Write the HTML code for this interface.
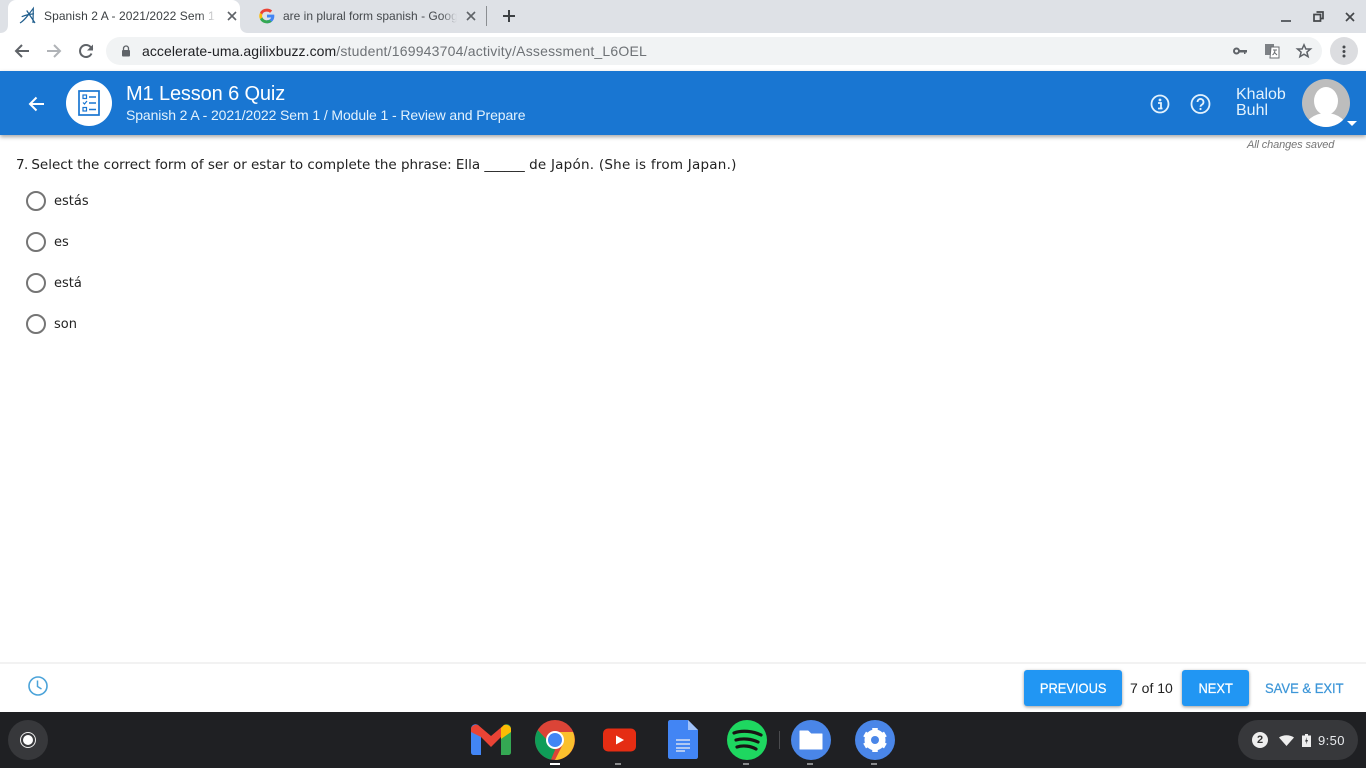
<!DOCTYPE html>
<html><head><meta charset="utf-8"><title>M1 Lesson 6 Quiz</title>
<style>
html,body{margin:0;padding:0;width:1366px;height:768px;overflow:hidden;background:#fff;font-family:"Liberation Sans",sans-serif}
.a{position:absolute;white-space:nowrap}
svg{position:absolute;overflow:visible}
.q{font-family:"DejaVu Sans",sans-serif;font-size:13px;color:#222}
.radio{position:absolute;left:26px;width:16px;height:16px;border:2px solid #757575;border-radius:50%}
.btn{position:absolute;top:670px;height:36px;background:#2196f3;color:#fff;border-radius:3px;box-shadow:0 1px 3px rgba(0,0,0,.4);font-size:14px;line-height:36px;text-align:center}
.btn span{display:inline-block;transform:scaleX(.92);-webkit-text-stroke:.25px #fff}
</style></head><body>
<!-- chrome top -->
<div class="a" style="left:0;top:0;width:1366px;height:33px;background:#dee1e6"></div>
<div class="a" style="left:8px;top:0;width:232px;height:33px;background:#fff;border-radius:8px 8px 0 0"></div>
<svg style="left:0;top:25px" width="8" height="8"><path d="M0 8C5 8 8 5 8 0V8Z" fill="#fff"/></svg>
<svg style="left:240px;top:25px" width="8" height="8"><path d="M8 8C3 8 0 5 0 0V8Z" fill="#fff"/></svg>
<div class="a" style="left:0;top:33px;width:1366px;height:38px;background:#fff"></div>
<svg style="left:18px;top:7px" width="20" height="18" viewBox="0 0 20 18"><path d="M2 16C7 13 11 7 15.300 1.300L15 16M3.700 9.700C8 8 12 7 16 7M8.700 3.500L17 16" fill="none" stroke="#1f5d8c" stroke-width="1.200"/></svg>
<div class="a" style="left:44px;top:8px;font-size:12px;line-height:16px;color:#3c4043;width:172px;overflow:hidden;letter-spacing:.07px">Spanish 2 A - 2021/2022 Sem 1</div>
<div class="a" style="left:200px;top:6px;width:16px;height:20px;background:linear-gradient(to right,rgba(255,255,255,0),#fff)"></div>
<svg style="left:227px;top:11px" width="10" height="10"><path d="M1 1L9 9M9 1L1 9" stroke="#5f6368" stroke-width="1.600"/></svg>
<svg style="left:259px;top:8px" width="16" height="16" viewBox="0 0 48 48"><path d="M46 20H24v8.500h12.500C35 33.400 30 36.500 24 36.500V46c12 0 22-8 22-22 0-1.400-.2-2.700-.4-4z" fill="#4285f4"/><path d="M24 37c-6.600 0-12.100-3.400-14-9.500L3 33.500C6.800 41.800 14.800 46 24 46c5.500 0 10.500-1.800 14.200-5l-6.800-5.500C29.300 36.800 26.800 37 24 37z" fill="#34a853"/><path d="M10 28.500c-1-3-1-6 0-9L3 14.500c-3 6-3 13 0 19z" fill="#fbbc05"/><path d="M24 11c3.500 0 6.500 1.200 9 3.500l6.500-6.500C35.500 4.300 30 2 24 2 14.800 2 6.800 6 3 14.500l7 5C11.900 13.400 17.400 11 24 11z" fill="#ea4335"/></svg>
<div class="a" style="left:283px;top:8px;font-size:12px;line-height:16px;color:#45494d;width:174px;overflow:hidden">are in plural form spanish - Google</div>
<div class="a" style="left:441px;top:6px;width:16px;height:20px;background:linear-gradient(to right,rgba(222,225,230,0),#dee1e6)"></div>
<svg style="left:466px;top:11px" width="10" height="10"><path d="M1 1L9 9M9 1L1 9" stroke="#5f6368" stroke-width="1.600"/></svg>
<div class="a" style="left:486px;top:6px;width:1px;height:20px;background:#8b8e92"></div>
<svg style="left:502px;top:9px" width="14" height="14"><path d="M7 1V13M1 7H13" stroke="#3c4043" stroke-width="2"/></svg>
<div class="a" style="left:1281px;top:20px;width:10px;height:2px;background:#5f6368"></div>
<svg style="left:1313px;top:11px" width="11" height="11"><path d="M3.500 1H10V7.500H8M1 3.500H7.500V10H1Z" fill="none" stroke="#44474a" stroke-width="1.700"/></svg>
<svg style="left:1345px;top:12px" width="10" height="10"><path d="M1 1L9 9M9 1L1 9" stroke="#44474a" stroke-width="1.700"/></svg>
<!-- toolbar -->
<svg style="left:14px;top:43px" width="16" height="16"><path d="M15 8H2M8 2L2 8L8 14" fill="none" stroke="#5f6368" stroke-width="2"/></svg>
<svg style="left:46px;top:43px" width="16" height="16"><path d="M1 8H14M8 2L14 8L8 14" fill="none" stroke="#b0b3b7" stroke-width="2"/></svg>
<svg style="left:78px;top:43px" width="16" height="16"><path d="M13.500 10.500A6 6 0 1 1 12.500 4L14.500 6" fill="none" stroke="#5f6368" stroke-width="2"/><path d="M15 1.500V7.500H9Z" fill="#5f6368"/></svg>
<div class="a" style="left:106px;top:37px;width:1216px;height:28px;background:#f1f3f4;border-radius:14px"></div>
<svg style="left:121px;top:45px" width="10" height="12"><path d="M2.500 5V3.500a2.500 2.500 0 0 1 5 0V5" fill="none" stroke="#5f6368" stroke-width="1.300"/><rect x="1" y="5" width="8" height="6.500" rx="1" fill="#5f6368"/></svg>
<div class="a" style="left:142px;top:43px;font-size:14px;line-height:16px;color:#202124;letter-spacing:.07px">accelerate-uma.agilixbuzz.com<span style="color:#6e7276;letter-spacing:.2px">/student/169943704/activity/Assessment_L6OEL</span></div>
<svg style="left:1233px;top:47px" width="14" height="8"><circle cx="3.500" cy="4" r="2.500" fill="none" stroke="#5f6368" stroke-width="2"/><path d="M6 3H14V5.500H12.500V7H11V5.500H6Z" fill="#5f6368"/></svg>
<svg style="left:1264px;top:43px" width="16" height="16"><rect x="1" y="1" width="9" height="11" fill="#7d8185"/><path d="M7 4H15V15H6Z" fill="#fff" stroke="#6a6d71"/><path d="M9 7H13M11 6.500C11 9 10 11 8.500 12M10 9L13 12" fill="none" stroke="#6a6d71"/></svg>
<svg style="left:1296px;top:43px" width="16" height="16" viewBox="0 0 16 16"><path d="M8 1.800L9.900 6H14.500L10.900 9.100L12.100 13.700L8 11.200L3.900 13.700L5.100 9.100L1.500 6H6.100Z" fill="none" stroke="#5f6368" stroke-width="1.500"/></svg>
<div class="a" style="left:1330px;top:37px;width:28px;height:28px;background:#dcdde0;border-radius:50%"></div>
<svg style="left:1342px;top:45px" width="4" height="13"><circle cx="2" cy="2" r="1.500" fill="#46494d"/><circle cx="2" cy="6.500" r="1.500" fill="#46494d"/><circle cx="2" cy="11" r="1.500" fill="#46494d"/></svg>
<!-- header -->
<div class="a" style="left:0;top:71px;width:1366px;height:64px;background:#1976d2;box-shadow:0 2px 4px rgba(0,0,0,.35)"></div>
<svg style="left:28px;top:96px" width="17" height="16"><path d="M16 8H2M8.500 1.500L2 8L8.500 14.500" fill="none" stroke="#fff" stroke-width="2"/></svg>
<div class="a" style="left:66px;top:80px;width:46px;height:46px;border-radius:50%;background:#fff"></div>
<svg style="left:78px;top:90px" width="22" height="26" viewBox="0 0 22 26"><rect x="1" y="1" width="20" height="24" fill="none" stroke="#1976d2" stroke-width="1.700"/><rect x="5" y="5" width="3.500" height="3.500" fill="none" stroke="#1976d2" stroke-width="1.200"/><path d="M11 7H18M11 13H18M11 19.500H18" stroke="#1976d2" stroke-width="1.500"/><path d="M5 12.500L6.500 14L9 11" fill="none" stroke="#1976d2" stroke-width="1.200"/><rect x="5" y="17.500" width="3.500" height="3.500" fill="none" stroke="#1976d2" stroke-width="1.200"/></svg>
<div class="a" style="left:126px;top:81px;font-size:20px;line-height:26px;color:#fff;letter-spacing:-.13px">M1 Lesson 6 Quiz</div>
<div class="a" style="left:126px;top:106px;font-size:14px;line-height:18px;color:#e3f2fd;letter-spacing:-.1px">Spanish 2 A - 2021/2022 Sem 1 / Module 1 - Review and Prepare</div>
<svg style="left:1150px;top:94px" width="20" height="20"><circle cx="10" cy="10" r="8.500" fill="none" stroke="#e3f2fd" stroke-width="1.800"/><circle cx="10" cy="6" r="1.400" fill="#e3f2fd"/><path d="M8 9H11V14M8 14.500H12.500" fill="none" stroke="#e3f2fd" stroke-width="1.800"/></svg>
<svg style="left:1190px;top:94px" width="21" height="20"><circle cx="10.500" cy="10" r="9" fill="none" stroke="#e3f2fd" stroke-width="1.800"/><path d="M7.500 8a3 3 0 1 1 4.500 2.600C11 11.200 10.500 11.800 10.500 12.800" fill="none" stroke="#e3f2fd" stroke-width="1.800"/><circle cx="10.500" cy="15" r="1.100" fill="#e3f2fd"/></svg>
<div class="a" style="left:1236px;top:87px;font-size:16px;line-height:15.500px;color:#e3f2fd">Khalob<br>Buhl</div>
<svg style="left:1302px;top:79px" width="48" height="48" viewBox="0 0 48 48"><defs><clipPath id="c"><circle cx="24" cy="24" r="24"/></clipPath></defs><circle cx="24" cy="24" r="24" fill="#bdbdbd"/><g clip-path="url(#c)"><ellipse cx="24" cy="22" rx="12" ry="14" fill="#fff"/><ellipse cx="24" cy="52" rx="22" ry="18" fill="#fff"/></g></svg>
<svg style="left:1347px;top:121px" width="10" height="5"><path d="M0 0H10L5 5Z" fill="#fff"/></svg>
<div class="a" style="left:1247px;top:138px;font-size:11px;line-height:14px;font-style:italic;color:#757575;letter-spacing:-.12px">All changes saved</div>
<!-- question -->
<div class="a q" style="left:16px;top:157px;line-height:16px;font-size:13.500px;letter-spacing:-.02px"><span style="letter-spacing:-.6px">7. </span>Select the correct form of ser or estar to complete the phrase: Ella ______ <span style="letter-spacing:.24px">de Japón. (She is from Japan.)</span></div>
<div class="radio" style="top:191px"></div><div class="a q" style="left:54px;top:194px;line-height:16px">estás</div>
<div class="radio" style="top:232px"></div><div class="a q" style="left:54px;top:235px;line-height:16px">es</div>
<div class="radio" style="top:273px"></div><div class="a q" style="left:54px;top:276px;line-height:16px">está</div>
<div class="radio" style="top:314px"></div><div class="a q" style="left:54px;top:317px;line-height:16px">son</div>
<!-- footer -->
<div class="a" style="left:0;top:662px;width:1366px;height:2px;background:#f2f2f2"></div>
<svg style="left:28px;top:676px" width="20" height="20"><circle cx="10" cy="10" r="9" fill="none" stroke="#4ba3d9" stroke-width="1.600"/><path d="M9.500 4.500V10.500L13.500 13" fill="none" stroke="#4ba3d9" stroke-width="1.500"/></svg>
<div class="btn" style="left:1024px;width:98px"><span>PREVIOUS</span></div>
<div class="a" style="left:1130px;top:679px;font-size:14px;line-height:18px;color:#222">7 of 10</div>
<div class="btn" style="left:1182px;width:67px"><span>NEXT</span></div>
<div class="a" style="left:1265px;top:679px;font-size:14px;line-height:18px;color:#3d96d8;transform:scaleX(.93);transform-origin:left;-webkit-text-stroke:.25px #3d96d8">SAVE &amp; EXIT</div>
<!-- shelf -->
<div class="a" style="left:0;top:712px;width:1366px;height:56px;background:#1f2023"></div>
<div class="a" style="left:8px;top:720px;width:40px;height:40px;border-radius:50%;background:#37383b"></div>
<div class="a" style="left:20px;top:732px;width:16px;height:16px;border:1px solid #eee;border-radius:50%;box-sizing:border-box"></div>
<div class="a" style="left:23px;top:735px;width:10px;height:10px;border-radius:50%;background:#fff"></div>
<!-- gmail -->
<svg style="left:471px;top:724px" width="40" height="32" viewBox="0 0 40 32"><path d="M0 5C0 1 4-1 7 1L10 4V31H3C1 31 0 30 0 28Z" fill="#4285f4"/><path d="M30 4L33 1C36-1 40 1 40 5V28C40 30 39 31 37 31H30Z" fill="#34a853"/><path d="M0 5C0 2 4 0 7 1L20 12L33 1L30 13L20 23L10 13L0 8Z" fill="#ea4335"/><path d="M33 1C36 0 40 2 40 5V8L30 15V4Z" fill="#fbbc05"/></svg>
<!-- chrome -->
<svg style="left:535px;top:720px" width="40" height="40" viewBox="0 0 40 40"><circle cx="20" cy="20" r="20" fill="#db4437"/><path d="M20 40A20 20 0 0 1 2.700 10L12 20L20 30L16 39.600Z" fill="#0f9d58"/><path d="M20 12H38A20 20 0 0 1 20 40L28 24Z" fill="#fbc02d"/><circle cx="20" cy="20" r="9" fill="#fff"/><circle cx="20" cy="20" r="7" fill="#4285f4"/></svg>
<div class="a" style="left:550px;top:763px;width:10px;height:2px;background:#fff"></div>
<!-- youtube -->
<svg style="left:603px;top:728px" width="33" height="24"><rect width="33" height="23" y="0.500" rx="5" fill="#e52d13"/><path d="M13 7.500L21 12L13 16.500Z" fill="#fff"/></svg>
<div class="a" style="left:615px;top:763px;width:6px;height:2px;background:#8a8b8d"></div>
<!-- docs -->
<svg style="left:668px;top:720px" width="30" height="39" viewBox="0 0 30 39"><path d="M2 0H20L30 10V37C30 38 29 39 28 39H2C1 39 0 38 0 37V2C0 1 1 0 2 0Z" fill="#4285f4"/><path d="M20 0L30 10H20Z" fill="#a1c2fa"/><path d="M8 20H22M8 24H22M8 28H22M8 31H17" stroke="#f1f1f1" stroke-width="1.300"/></svg>
<!-- spotify -->
<svg style="left:727px;top:720px" width="40" height="40" viewBox="0 0 40 40"><circle cx="20" cy="20" r="20" fill="#1ed760"/><path d="M7 13C15 10 26 11 34 15M9 20C16 18 25 19 31 22M10 27C16 25 24 26 29 29" fill="none" stroke="#191414" stroke-width="3.200" stroke-linecap="round"/></svg>
<div class="a" style="left:743px;top:763px;width:6px;height:2px;background:#8a8b8d"></div>
<div class="a" style="left:779px;top:731px;width:1px;height:18px;background:#4a4b4e"></div>
<!-- files -->
<svg style="left:791px;top:720px" width="40" height="40" viewBox="0 0 40 40"><circle cx="20" cy="20" r="20" fill="#4a86e8"/><path d="M9 11H17L20 14H31V29H9Z" fill="#fff" stroke="#fff" stroke-linejoin="round"/></svg>
<div class="a" style="left:807px;top:763px;width:6px;height:2px;background:#8a8b8d"></div>
<!-- settings -->
<svg style="left:855px;top:720px" width="40" height="40" viewBox="0 0 40 40"><circle cx="20" cy="20" r="20" fill="#4a86e8"/><circle cx="20" cy="20" r="8" fill="none" stroke="#fff" stroke-width="5"/><path d="M20 8V32M9.600 14L30.400 26M9.600 26L30.400 14" stroke="#fff" stroke-width="5.500"/><circle cx="20" cy="20" r="6.500" fill="#fff"/><circle cx="20" cy="20" r="4" fill="#4a86e8"/></svg>
<div class="a" style="left:871px;top:763px;width:6px;height:2px;background:#8a8b8d"></div>
<!-- tray -->
<div class="a" style="left:1238px;top:720px;width:120px;height:40px;border-radius:20px;background:#37383b"></div>
<div class="a" style="left:1252px;top:732px;width:16px;height:16px;border-radius:50%;background:#eee;color:#333;font-size:11px;font-weight:bold;line-height:16px;text-align:center">2</div>
<svg style="left:1279px;top:735px" width="15" height="11"><path d="M0 2.500C4 -0.500 11 -0.500 15 2.500L7.500 11Z" fill="#eee"/></svg>
<svg style="left:1302px;top:734px" width="9" height="13"><path d="M3 0H6V1.500H9V13H0V1.500H3Z" fill="#eee"/><path d="M5 3L3 7.500H4.500L4 10.500L6 6H4.500Z" fill="#37383b"/></svg>
<div class="a" style="left:1318px;top:733px;font-size:13px;line-height:16px;color:#e8eaed;letter-spacing:.4px">9:50</div>
</body></html>
